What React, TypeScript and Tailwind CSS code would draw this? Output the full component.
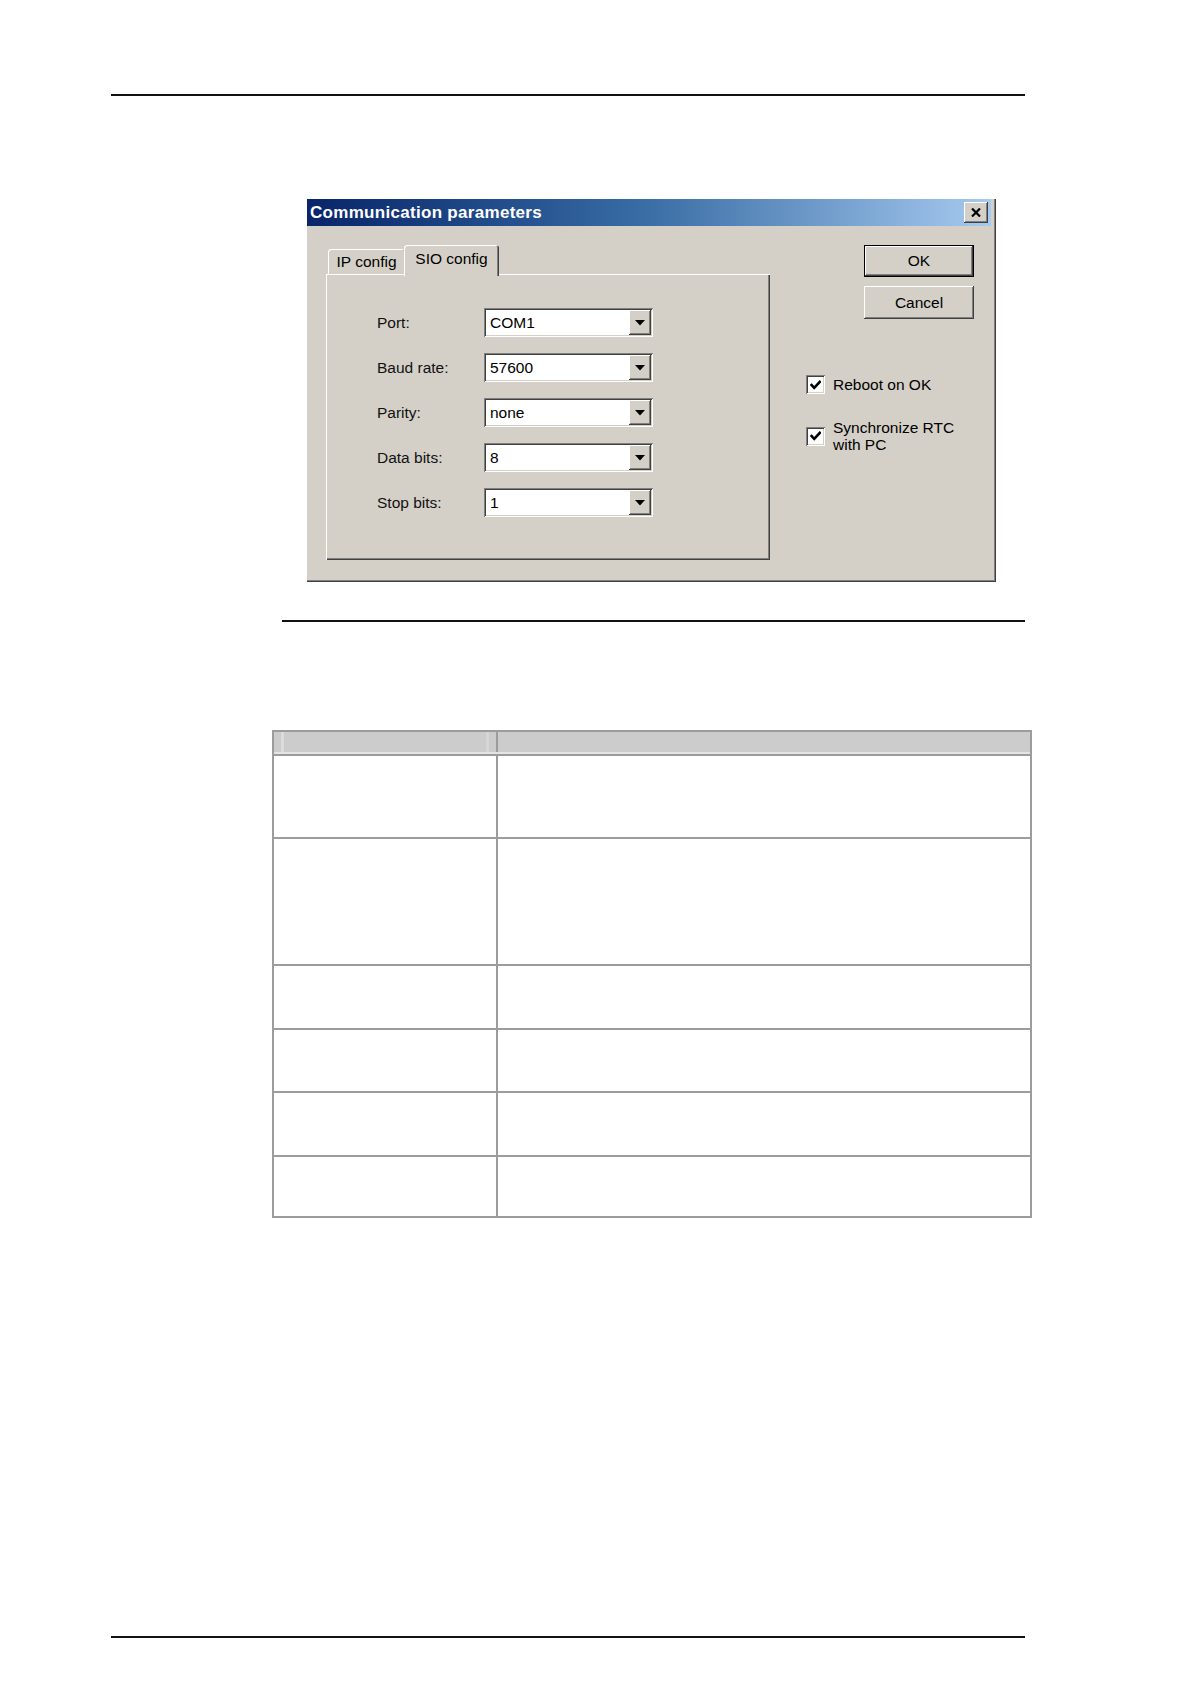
import React from 'react';

const raised =
  'shadow-[inset_-1px_-1px_0_#404040,inset_1px_1px_0_#ffffff,inset_-2px_-2px_0_#808080,inset_2px_2px_0_#d4d0c8]';
const sunken =
  'shadow-[inset_1px_1px_0_#808080,inset_-1px_-1px_0_#ffffff,inset_2px_2px_0_#404040,inset_-2px_-2px_0_#d4d0c8]';

const fields = [
  { label: 'Port:', value: 'COM1' },
  { label: 'Baud rate:', value: '57600' },
  { label: 'Parity:', value: 'none' },
  { label: 'Data bits:', value: '8' },
  { label: 'Stop bits:', value: '1' },
];

const rowHeights = [83, 127, 64, 63, 64, 61];

function Combo({ value }: { value: string }) {
  return (
    <div className={`relative w-[169px] h-[29px] bg-white ${sunken} flex items-center`}>
      <span className="pl-[6px] text-[15.5px] leading-none text-black">{value}</span>
      <div className={`absolute right-[2px] top-[2px] bottom-[2px] w-[22px] bg-[#d4d0c8] ${raised} flex items-center justify-center`}>
        <svg width="10" height="6" viewBox="0 0 10 6">
          <polygon points="0,0 10,0 5,5.5" fill="#000" />
        </svg>
      </div>
    </div>
  );
}

function CheckBox() {
  return (
    <div className={`w-[19px] h-[19px] shrink-0 bg-white ${sunken} flex items-center justify-center`}>
      <svg width="11" height="10" viewBox="0 0 11 10">
        <path d="M1.5 5 L4.2 7.8 L9.8 1.8" stroke="#000" strokeWidth="2.6" fill="none" strokeLinecap="square" />
      </svg>
    </div>
  );
}

export default function App() {
  return (
    <div className="w-[1190px] h-[1684px] bg-white flex flex-col font-['Liberation_Sans',Arial,sans-serif] text-black">
      {/* header rule */}
      <div className="mt-[94px] ml-[111px] w-[914px] h-[2px] bg-[#111]" />

      {/* dialog */}
      <div className="mt-[103px] ml-[307px] w-[689px] h-[383px] bg-[#d4d0c8] shadow-[inset_-1px_-1px_0_#404040,inset_-2px_-2px_0_#808080] pr-[5px] pb-[4px] flex flex-col">
        <div className="h-[27px] bg-linear-to-r from-[#0a246a] via-[#3a6ea5] to-[#a6caf0] flex items-center justify-between pl-[3px] pr-[3px]">
          <span className="text-white font-bold text-[17px] leading-none tracking-[0.3px]">Communication parameters</span>
          <div className={`w-[24px] h-[21px] bg-[#d4d0c8] ${raised} flex items-center justify-center`}>
            <svg width="10" height="9" viewBox="0 0 10 9">
              <path d="M1 0.5 L9 8.5 M9 0.5 L1 8.5" stroke="#000" strokeWidth="2.2" />
            </svg>
          </div>
        </div>

        <div className="flex pt-[19px] pl-[19px]">
          {/* tabs + panel */}
          <div className="flex flex-col w-[444px]">
            <div className="flex items-end h-[29px] pl-[2px]">
              <div className="w-[77px] h-[25px] bg-[#d4d0c8] rounded-t-[3px] shadow-[inset_1px_1px_0_#ffffff,inset_-1px_0_0_#808080] flex items-center justify-center text-[15.5px] leading-none">
                IP config
              </div>
              <div className="relative z-10 -mb-[2px] -ml-[1px] w-[95px] h-[31px] bg-[#d4d0c8] rounded-t-[3px] shadow-[inset_1px_1px_0_#ffffff,inset_-1px_0_0_#404040,inset_-2px_0_0_#808080] flex items-start justify-center pt-[6px] text-[15.5px] leading-none">
                SIO config
              </div>
            </div>
            <div className="h-[286px] bg-[#d4d0c8] shadow-[inset_1px_1px_0_#ffffff,inset_-1px_-1px_0_#404040,inset_-2px_-2px_0_#808080] pt-[34px] pl-[51px]">
              <div className="flex flex-col gap-[16px]">
                {fields.map(f => (
                  <div key={f.label} className="flex items-center h-[29px]">
                    <span className="w-[107px] text-[15.5px] leading-none text-[#111]">{f.label}</span>
                    <Combo value={f.value} />
                  </div>
                ))}
              </div>
            </div>
          </div>

          {/* buttons + options */}
          <div className="ml-[36px] w-[168px] flex flex-col">
            <div className="self-end w-[110px] h-[32px] border border-black bg-[#d4d0c8] flex">
              <div className={`flex-1 ${raised} flex items-center justify-center text-[15.5px] leading-none`}>OK</div>
            </div>
            <div className={`self-end mt-[9px] w-[110px] h-[33px] bg-[#d4d0c8] ${raised} flex items-center justify-center text-[15.5px] leading-none`}>
              Cancel
            </div>
            <div className="mt-[56px] flex items-center gap-[8px] h-[19px]">
              <CheckBox />
              <span className="text-[15.5px] leading-none">Reboot on OK</span>
            </div>
            <div className="mt-[25px] flex items-center gap-[8px]">
              <CheckBox />
              <span className="text-[15.5px] leading-[17px]">
                Synchronize RTC
                <br />
                with PC
              </span>
            </div>
          </div>
        </div>
      </div>

      {/* caption rule */}
      <div className="mt-[38px] ml-[282px] w-[743px] h-[2px] bg-[#111]" />

      {/* table */}
      <div className="mt-[108px] ml-[272px] w-[760px] border-2 border-[#9c9c9c] flex flex-col">
        <div className="h-[22px] bg-[#cccccc] flex border-b-2 border-[#e4e4e4]">
          <div className="w-[222px] relative">
            <div className="absolute left-[7px] top-0 bottom-0 w-[3px] bg-[#dcdcdc]" />
            <div className="absolute right-[7px] top-0 bottom-0 w-[3px] bg-[#d6d6d6]" />
          </div>
          <div className="flex-1 border-l-2 border-[#9c9c9c]" />
        </div>
        {rowHeights.map((h, i) => (
          <div
            key={i}
            className="flex border-t-2 border-[#9c9c9c]"
            style={{ height: h }}
          >
            <div className="w-[222px]" />
            <div className="flex-1 border-l-2 border-[#9c9c9c]" />
          </div>
        ))}
      </div>

      {/* footer rule */}
      <div className="mt-[418px] ml-[111px] w-[914px] h-[2px] bg-[#111]" />
    </div>
  );
}
